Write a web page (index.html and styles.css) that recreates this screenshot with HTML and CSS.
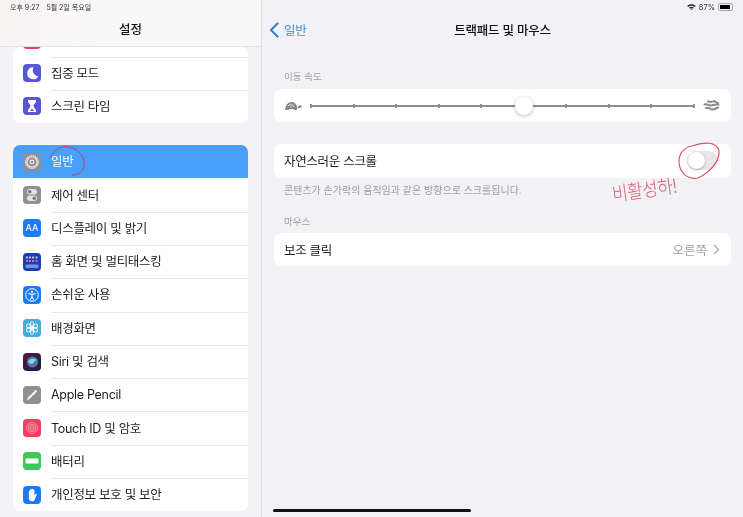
FILE: index.html
```html
<!DOCTYPE html>
<html lang="ko">
<head>
  <meta charset="UTF-8" />
  <meta name="viewport" content="width=device-width, initial-scale=1.0" />
  <title>설정</title>
  <link rel="stylesheet" href="styles.css">
</head>
<body>
  <div class="screen">
    <aside class="sidebar">
      <header class="side-head">
        <div class="status-left"><span>오후 9:27</span><span>5월 2일 목요일</span></div>
        <h1>설정</h1>
      </header>

      <div class="side-list">
        <ul class="card">
          <li class="row row-cut"><span class="icon icon-red"></span></li>
          <li class="row">
            <span class="icon icon-indigo">
              <svg viewBox="0 0 18 18"><path d="M10.500 3.200a6 6 0 1 0 4.800 9.200A6.300 6.300 0 0 1 10.500 3.200z" fill="#fff"/></svg>
            </span>
            <span class="label">집중 모드</span>
          </li>
          <li class="row">
            <span class="icon icon-indigo">
              <svg viewBox="0 0 18 18"><path d="M5 3h8v1.200c0 2-2.600 3.400-2.600 4.800s2.600 2.800 2.600 4.800V15H5v-1.200c0-2 2.600-3.400 2.600-4.800S5 6.200 5 4.200z" fill="#fff"/><path d="M7 14l2-2.500 2 2.500z" fill="#5856d6"/></svg>
            </span>
            <span class="label">스크린 타임</span>
          </li>
        </ul>

        <ul class="card">
          <li class="row row-active">
            <span class="icon icon-grey">
              <svg viewBox="0 0 18 18" fill="none"><circle cx="9" cy="9" r="6.300" stroke="#e9e9ec" stroke-width="1.600" stroke-dasharray="1.200 .8"/><circle cx="9" cy="9" r="5" stroke="#e9e9ec" stroke-width="1.200"/><circle cx="9" cy="9" r="2.400" fill="#e9e9ec"/><circle cx="9" cy="9" r="1.100" fill="#77777c"/></svg>
            </span>
            <span class="label">일반</span>
          </li>
          <li class="row">
            <span class="icon icon-grey">
              <svg viewBox="0 0 18 18"><rect x="4" y="3" width="10" height="5.500" rx="2.750" fill="#e4e4e6"/><circle cx="6.700" cy="5.750" r="1.800" fill="#77777c"/><rect x="4" y="9.500" width="10" height="5.500" rx="2.750" fill="#e4e4e6"/><circle cx="11.300" cy="12.250" r="1.800" fill="#77777c"/></svg>
            </span>
            <span class="label">제어 센터</span>
          </li>
          <li class="row">
            <span class="icon icon-blue icon-text">AA</span>
            <span class="label">디스플레이 및 밝기</span>
          </li>
          <li class="row">
            <span class="icon icon-navy">
              <svg viewBox="0 0 18 18">
                <g fill="#b9c6f5"><rect x="3" y="3.500" width="2" height="2"/><rect x="6" y="3.500" width="2" height="2"/><rect x="9" y="3.500" width="2" height="2"/><rect x="12.500" y="3.500" width="2" height="2"/></g>
                <g fill="#d46fb0"><rect x="3" y="7" width="2" height="2"/><rect x="6" y="7" width="2" height="2"/><rect x="9" y="7" width="2" height="2"/><rect x="12.500" y="7" width="2" height="2"/></g>
                <rect x="2.500" y="11.500" width="13" height="3.500" rx="1" fill="#6f93ee"/>
              </svg>
            </span>
            <span class="label">홈 화면 및 멀티태스킹</span>
          </li>
          <li class="row">
            <span class="icon icon-blue">
              <svg viewBox="0 0 18 18" fill="none" stroke="#fff"><circle cx="9" cy="9" r="6.300" stroke-width="1"/><circle cx="9" cy="5.800" r="1.100" fill="#fff" stroke="none"/><path d="M5.500 7.600L9 8.300l3.500-.7M9 8.300v2.300M9 10.600l-1.700 3.200M9 10.600l1.700 3.200" stroke-width="1.100"/></svg>
            </span>
            <span class="label">손쉬운 사용</span>
          </li>
          <li class="row">
            <span class="icon icon-teal">
              <svg viewBox="0 0 18 18" fill="none" stroke="#fff" stroke-width=".9"><ellipse cx="9" cy="5.800" rx="2" ry="3"/><ellipse cx="9" cy="12.200" rx="2" ry="3"/><ellipse cx="9" cy="5.800" rx="2" ry="3" transform="rotate(60 9 9)"/><ellipse cx="9" cy="5.800" rx="2" ry="3" transform="rotate(120 9 9)"/><ellipse cx="9" cy="5.800" rx="2" ry="3" transform="rotate(240 9 9)"/><ellipse cx="9" cy="5.800" rx="2" ry="3" transform="rotate(300 9 9)"/></svg>
            </span>
            <span class="label">배경화면</span>
          </li>
          <li class="row">
            <span class="icon icon-siri">
              <svg viewBox="0 0 18 18"><circle cx="9.500" cy="9" r="5.500" fill="#3d7fa8"/><path d="M5 9c2-4 5-4 9-2-2 .6-3 1.600-3.500 3-1.500 1.500-3.500 1-5.500-1z" fill="#8fd0dc"/><path d="M5 9.500c2 2.500 5 3.500 8.500 1.500-1.500 3-5.500 4-8.500-1.500z" fill="#b24d9c"/></svg>
            </span>
            <span class="label">Siri 및 검색</span>
          </li>
          <li class="row">
            <span class="icon icon-grey">
              <svg viewBox="0 0 18 18"><path d="M12.800 3.800l1.400 1.400-8 8-2.100.7.700-2.100z" fill="#fff"/></svg>
            </span>
            <span class="label">Apple Pencil</span>
          </li>
          <li class="row">
            <span class="icon icon-pink">
              <svg viewBox="0 0 18 18" fill="none" stroke="#f9a3b4" stroke-width=".8"><circle cx="9" cy="9" r="5.500"/><circle cx="9" cy="9" r="3.800"/><circle cx="9" cy="9" r="2.200"/><path d="M9 8v2.500"/></svg>
            </span>
            <span class="label">Touch ID 및 암호</span>
          </li>
          <li class="row">
            <span class="icon icon-green">
              <svg viewBox="0 0 18 18"><rect x="2.500" y="6.500" width="13" height="5" rx="1" fill="#fff"/></svg>
            </span>
            <span class="label">배터리</span>
          </li>
          <li class="row">
            <span class="icon icon-blue">
              <svg viewBox="0 0 18 18"><path d="M5.800 9.500V5.200a.7.700 0 0 1 1.400 0V3.800a.7.700 0 0 1 1.400 0v-.4a.7.700 0 0 1 1.400 0v.8a.7.700 0 0 1 1.400 0v5.400l1-1.500c.6-.7 1.600 0 1.200.8L11.500 14c-.5.900-1.200 1.300-2.300 1.300-2 0-3.400-1.300-3.400-3.300z" fill="#fff"/></svg>
            </span>
            <span class="label">개인정보 보호 및 보안</span>
          </li>
        </ul>
      </div>
    </aside>

    <main class="detail">
      <div class="status-right">
        <svg class="wifi" viewBox="0 0 10 7"><path d="M0 2.200C2.800-.4 7.200-.4 10 2.200L8.900 3.400C6.700 1.400 3.300 1.400 1.100 3.400zM2.100 4.300c1.700-1.500 4.100-1.500 5.800 0L6.800 5.400c-1.100-.9-2.500-.9-3.600 0zM3.900 6c.7-.5 1.500-.5 2.200 0L5 7z" fill="#222"/></svg>
        <span>87%</span>
        <span class="battery"><span class="battery-fill"></span></span>
      </div>

      <nav class="nav">
        <a class="back">
          <svg viewBox="0 0 10 16"><path d="M8.500 1.500L2 8l6.500 6.500" fill="none" stroke="#3a80d2" stroke-width="2.200" stroke-linecap="round" stroke-linejoin="round"/></svg>
          <span>일반</span>
        </a>
        <h2>트랙패드 및 마우스</h2>
      </nav>

      <section class="settings">
        <p class="group-title">이동 속도</p>
        <div class="panel panel-slider">
          <svg class="speed-icon" viewBox="0 0 18 12" fill="#85858a"><path d="M1 10C1.500 5 4 2 7.500 2S13 5 13.500 8.500l-1 1.500h-2l-.5-1H5l-.5 1z"/><path d="M14 7c0-2 3.500-2.500 3.800-.5 0 1-2 1.500-3.800 1.500z"/><path d="M4 6l2-1.800M7 7.500V4M10 7l-1.500-2.500" stroke="#fff" stroke-width=".8"/></svg>
          <div class="track">
            <i></i><i></i><i></i><i></i><i></i><i></i><i></i><i></i><i></i><i></i>
            <span class="thumb"></span>
          </div>
          <svg class="speed-icon" viewBox="0 0 18 12" fill="none" stroke="#8a8a8f" stroke-width="2" stroke-linecap="round"><path d="M5 1.500c2 .5 4 .8 6-.3 1.500.8 2.500 1 4 2"/><path d="M1.500 4.500c3-1 5 1.500 7 1s3-1.500 7-1"/><path d="M3 8c3-1 5 2 7 1.500s3-1 5-2"/></svg>
        </div>

        <div class="panel panel-row panel-scroll">
          <span class="label">자연스러운 스크롤</span>
          <span class="switch"><span class="knob"></span></span>
        </div>
        <p class="note">콘텐츠가 손가락의 움직임과 같은 방향으로 스크롤됩니다.</p>

        <p class="group-title group-mouse">마우스</p>
        <div class="panel panel-row">
          <span class="label">보조 클릭</span>
          <span class="value">오른쪽
            <svg viewBox="0 0 7 11"><path d="M1.200 1l4.300 4.500L1.200 10" fill="none" stroke="#a9a9ae" stroke-width="1.300"/></svg>
          </span>
        </div>
      </section>

      <div class="home-bar"></div>
    </main>

    <!-- pen marks drawn over the screenshot -->
    <svg class="ink" viewBox="0 0 743 517" fill="none">
      <path d="M50 158C54 149 62 145 70 147 80 150 85 158 84 166 83 172 78 175 72 175" stroke="#a8477f" stroke-width="1"/>
      <path d="M692 146C703 142 717 141 719 151 720 160 711 172 698 178 687 180 679 172 679 161 679 153 685 147 692 146" stroke="#dd4a5c" stroke-width="1.100"/>
    </svg>
    <span class="ink-note">비활성하!</span>
  </div>
</body>
</html>
```

FILE: styles.css
```css
* {
  box-sizing: border-box;
}

body {
  margin: 0;
  font-family: Inter, "Noto Sans CJK KR", sans-serif;
  color: #1c1c1e;
  background-color: #f1f1f6;
}

ul {
  list-style: none;
  margin: 0;
  padding: 0;
}

/* the reference is a soft, resized photo of a tablet */
.screen {
  position: relative;
  display: flex;
  width: 743px;
  height: 517px;
  overflow: hidden;
  filter: blur(0.4px);
}

.sidebar {
  width: 262px;
  flex: none;
  overflow: hidden;
  background-color: #f2f2f7;
  border-right: 1px solid #e2e2e6;
}

.side-head {
  position: relative;
  z-index: 1;
  height: 47px;
  background: linear-gradient(100deg, #f9f3f3, #f8f8f9 45%);
  border-bottom: 1px solid #e4e4e7;
}

.status-left {
  display: flex;
  gap: 7px;
  padding: 2px 0 0 10px;
  font-size: 7px;
  line-height: 11px;
  color: #333;
}

.side-head h1 {
  margin: 8px 0 0;
  font-size: 12.5px;
  font-weight: 500;
  line-height: 18px;
  text-align: center;
  color: #111;
}

.side-list {
  padding: 0 13px;
}

.card {
  background-color: #fff;
  border-radius: 7px;
  overflow: hidden;
  margin-bottom: 22px;
}

.row {
  display: flex;
  align-items: center;
  gap: 10px;
  height: 33.3px;
  padding-left: 10px;
  position: relative;
}

.row + .row::before {
  content: "";
  position: absolute;
  top: 0;
  left: 38px;
  right: 0;
  border-top: 1px solid #e9e9ec;
}

/* last row of the group, scrolled almost out under the header */
.row-cut {
  height: 9.5px;
  align-items: flex-start;
  overflow: hidden;
}

.row-cut .icon {
  margin-top: -16px;
}

.row-active {
  background-color: #4aa0f8;
  color: #fff;
}

.row-active + .row::before {
  display: none;
}

.label {
  padding-top: 1px;
  font-size: 12.5px;
  line-height: 16px;
  letter-spacing: -0.3px;
  color: inherit;
}

.icon {
  display: block;
  flex: none;
  width: 18px;
  height: 18px;
  border-radius: 4px;
  overflow: hidden;
}

.icon svg {
  display: block;
  width: 18px;
  height: 18px;
}

.icon-text {
  font-size: 9px;
  font-weight: 500;
  line-height: 18px;
  text-align: center;
  color: #fff;
}

.icon-red { background-color: #ef3a55; }
.icon-indigo { background-color: #5856d6; }
.icon-grey { background-color: #8e8e93; }
.icon-blue { background-color: #1a7bf0; }
.icon-navy { background-color: #1d3fae; }
.icon-teal { background-color: #45acd9; }
.icon-siri { background: linear-gradient(135deg, #5e1446, #11233f); }
.icon-pink { background-color: #f0405f; }
.icon-green { background-color: #3ec95c; }

.detail {
  flex: 1;
  position: relative;
  padding: 0 12px;
  background-color: #f1f1f6;
}

.status-right {
  display: flex;
  justify-content: flex-end;
  align-items: center;
  gap: 3px;
  height: 14px;
  margin-right: -2px;
  font-size: 7.5px;
  color: #333;
}

.wifi {
  width: 9px;
  height: 6px;
}

.battery {
  display: block;
  width: 15px;
  height: 8px;
  padding: 1px;
  border: 1px solid #aaa;
  border-radius: 2px;
}

.battery-fill {
  display: block;
  width: 88%;
  height: 100%;
  background-color: #000;
}

.nav {
  position: relative;
  height: 32px;
  padding-bottom: 2px;
  display: flex;
  align-items: center;
  justify-content: center;
}

.back {
  position: absolute;
  left: -5px;
  top: 6px;
  display: flex;
  align-items: center;
  gap: 5px;
  font-size: 12.5px;
  letter-spacing: -0.2px;
  color: #4a8ad6;
}

.back svg {
  width: 10px;
  height: 16px;
}

.nav h2 {
  margin: 0;
  font-size: 12.5px;
  font-weight: 500;
  letter-spacing: -0.2px;
  color: #111;
}

.settings {
  padding-top: 24px;
}

.group-title,
.note {
  margin: 0;
  padding-left: 10px;
  font-size: 9.5px;
  line-height: 14px;
  color: #9d9da2;
}

.group-title {
  margin-bottom: 5px;
}

.group-mouse {
  margin-top: 18px;
  margin-bottom: 4.5px;
}

.note {
  margin-top: 5px;
  font-size: 10px;
}

.panel {
  height: 33.3px;
  background-color: #fff;
  border-radius: 7px;
  padding: 0 11px 0 10px;
  display: flex;
  align-items: center;
}

.panel .label {
  padding-top: 2px;
}

.panel-row {
  justify-content: space-between;
}

.panel-scroll {
  margin-top: 22px;
  padding-right: 13px;
}

.panel-slider {
  gap: 8px;
  padding-right: 10px;
}

.speed-icon {
  flex: none;
  width: 18px;
  height: 12px;
}

.track {
  position: relative;
  flex: 1;
  height: 2px;
  background-color: #8e8e90;
  display: flex;
  justify-content: space-between;
}

.track i {
  display: block;
  width: 2px;
  height: 4px;
  margin-top: -1px;
  background-color: #8e8e90;
}

.thumb {
  position: absolute;
  left: 205px;
  top: -8px;
  width: 18px;
  height: 18px;
  border-radius: 50%;
  background-color: #fff;
  box-shadow: 0 1px 4px rgba(0, 0, 0, 0.25);
}

.switch {
  display: block;
  width: 31px;
  height: 19px;
  padding: 1px;
  border-radius: 10px;
  background-color: #e7e7e9;
}

.knob {
  display: block;
  width: 17px;
  height: 17px;
  border-radius: 50%;
  background-color: #fff;
  box-shadow: 0 1px 3px rgba(0, 0, 0, 0.25);
}

.value {
  display: flex;
  align-items: center;
  gap: 6px;
  font-size: 12.5px;
  color: #a0a0a5;
}

.value svg {
  width: 7px;
  height: 11px;
}

.home-bar {
  position: absolute;
  left: 11px;
  bottom: 5px;
  width: 198px;
  height: 3px;
  border-radius: 2px;
  background-color: #111;
}

.ink {
  position: absolute;
  inset: 0;
  width: 743px;
  height: 517px;
  pointer-events: none;
}

.ink-note {
  position: absolute;
  left: 612px;
  top: 178px;
  font-size: 17px;
  line-height: 24px;
  font-weight: 300;
  letter-spacing: -0.5px;
  color: #e0606e;
  transform: rotate(-8deg) scaleY(1.15);
}
```
